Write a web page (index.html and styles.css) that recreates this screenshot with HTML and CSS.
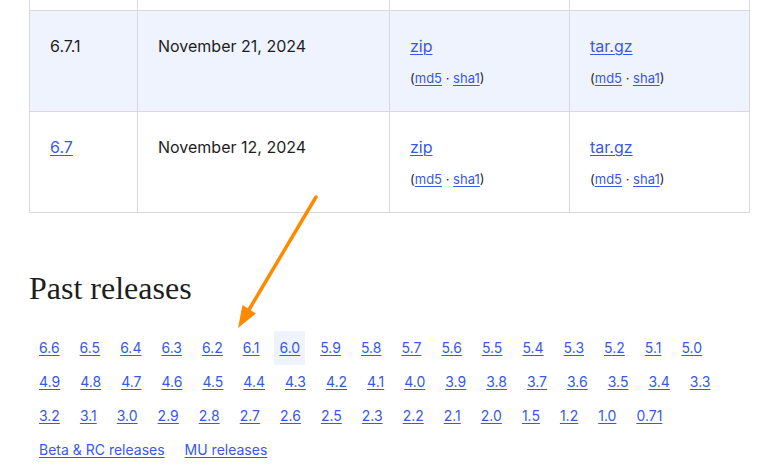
FILE: index.html
```html
<!DOCTYPE html>
<html lang="en">
<head>
<meta charset="utf-8">
<title>Releases</title>
<link rel="stylesheet" href="styles.css">
</head>
<body>
<div class="page">
  <table class="releases">
    <colgroup>
      <col class="c-ver"><col class="c-date"><col class="c-zip"><col class="c-tar">
    </colgroup>
    <tr class="stub"><td></td><td></td><td></td><td></td></tr>
    <tr class="alt">
      <td>6.7.1</td>
      <td>November 21, 2024</td>
      <td><a href="#">zip</a><div class="sums">(<a href="#">md5</a> · <a href="#">sha1</a>)</div></td>
      <td><a href="#">tar.gz</a><div class="sums">(<a href="#">md5</a> · <a href="#">sha1</a>)</div></td>
    </tr>
    <tr>
      <td><a href="#">6.7</a></td>
      <td>November 12, 2024</td>
      <td><a href="#">zip</a><div class="sums">(<a href="#">md5</a> · <a href="#">sha1</a>)</div></td>
      <td><a href="#">tar.gz</a><div class="sums">(<a href="#">md5</a> · <a href="#">sha1</a>)</div></td>
    </tr>
  </table>

  <h2 class="past-title">Past releases</h2>
  <ul class="versions">
    <li><a href="#">6.6</a></li><li><a href="#">6.5</a></li><li><a href="#">6.4</a></li><li><a href="#">6.3</a></li><li><a href="#">6.2</a></li><li><a href="#">6.1</a></li><li class="current"><a href="#">6.0</a></li><li><a href="#">5.9</a></li><li><a href="#">5.8</a></li><li><a href="#">5.7</a></li><li><a href="#">5.6</a></li><li><a href="#">5.5</a></li><li><a href="#">5.4</a></li><li><a href="#">5.3</a></li><li><a href="#">5.2</a></li><li><a href="#">5.1</a></li><li><a href="#">5.0</a></li>
    <li><a href="#">4.9</a></li><li><a href="#">4.8</a></li><li><a href="#">4.7</a></li><li><a href="#">4.6</a></li><li><a href="#">4.5</a></li><li><a href="#">4.4</a></li><li><a href="#">4.3</a></li><li><a href="#">4.2</a></li><li><a href="#">4.1</a></li><li><a href="#">4.0</a></li><li><a href="#">3.9</a></li><li><a href="#">3.8</a></li><li><a href="#">3.7</a></li><li><a href="#">3.6</a></li><li><a href="#">3.5</a></li><li><a href="#">3.4</a></li><li><a href="#">3.3</a></li>
    <li><a href="#">3.2</a></li><li><a href="#">3.1</a></li><li><a href="#">3.0</a></li><li><a href="#">2.9</a></li><li><a href="#">2.8</a></li><li><a href="#">2.7</a></li><li><a href="#">2.6</a></li><li><a href="#">2.5</a></li><li><a href="#">2.3</a></li><li><a href="#">2.2</a></li><li><a href="#">2.1</a></li><li><a href="#">2.0</a></li><li><a href="#">1.5</a></li><li><a href="#">1.2</a></li><li><a href="#">1.0</a></li><li><a href="#">0.71</a></li>
  </ul>
  <ul class="versions extra">
    <li><a href="#">Beta &amp; RC releases</a></li><li><a href="#">MU releases</a></li>
  </ul>

  <svg class="arrow" width="761" height="469" viewBox="0 0 761 469" aria-hidden="true">
    <line x1="316" y1="197" x2="247" y2="313" stroke="#ff8a00" stroke-width="3.5" stroke-linecap="round"/>
    <polygon points="238,328 242.5,305 256,313.5" fill="#ff8a00"/>
  </svg>
</div>
</body>
</html>
```
FILE: styles.css
```css
html, body {
  margin: 0;
  padding: 0;
  background: #ffffff;
}
body {
  font-family: Inter, "Noto Sans", sans-serif;
  color: #1e1e1e;
}
a {
  color: #3858e9;
  text-decoration: underline;
  text-underline-offset: 2px;
  text-decoration-thickness: 1px;
}
.page {
  position: relative;
  padding: 0 0 0 29px;
  width: 721px;
}
.releases {
  border-collapse: collapse;
  table-layout: fixed;
  width: 721px;
  font-size: 16px;
  line-height: 24px;
}
.c-ver { width: 108px; }
.c-date { width: 252px; }
.c-zip { width: 180px; }
.c-tar { width: 180px; }
.releases td {
  border: 1px solid #d9d9dc;
  vertical-align: top;
  padding: 23px 20px 0 20px;
  height: 77px;
}
.releases tr.stub td {
  border-top: none;
  height: 10px;
  padding: 0;
}
.releases tr.alt td {
  background: #eff3fe;
}
.sums {
  font-size: 13px;
  line-height: 18px;
  margin-top: 11px;
}
.past-title {
  font-family: "Liberation Serif", "Times New Roman", serif;
  font-weight: 400;
  font-size: 32px;
  line-height: 40px;
  margin: 55px 0 0 0;
  color: #1e1e1e;
}
.versions {
  list-style: none;
  margin: 0;
  padding: 0 0 0 5px;
  display: flex;
  flex-wrap: wrap;
  column-gap: 10px;
  width: 696px;
  font-size: 14px;
  line-height: 24px;
}
.past-title + .versions {
  margin-top: 23px;
}
.versions li a {
  display: block;
  padding: 5px;
}
.versions li.current a {
  background: #eff3fe;
}
.arrow {
  position: absolute;
  left: 0;
  top: 0;
  pointer-events: none;
}
```
